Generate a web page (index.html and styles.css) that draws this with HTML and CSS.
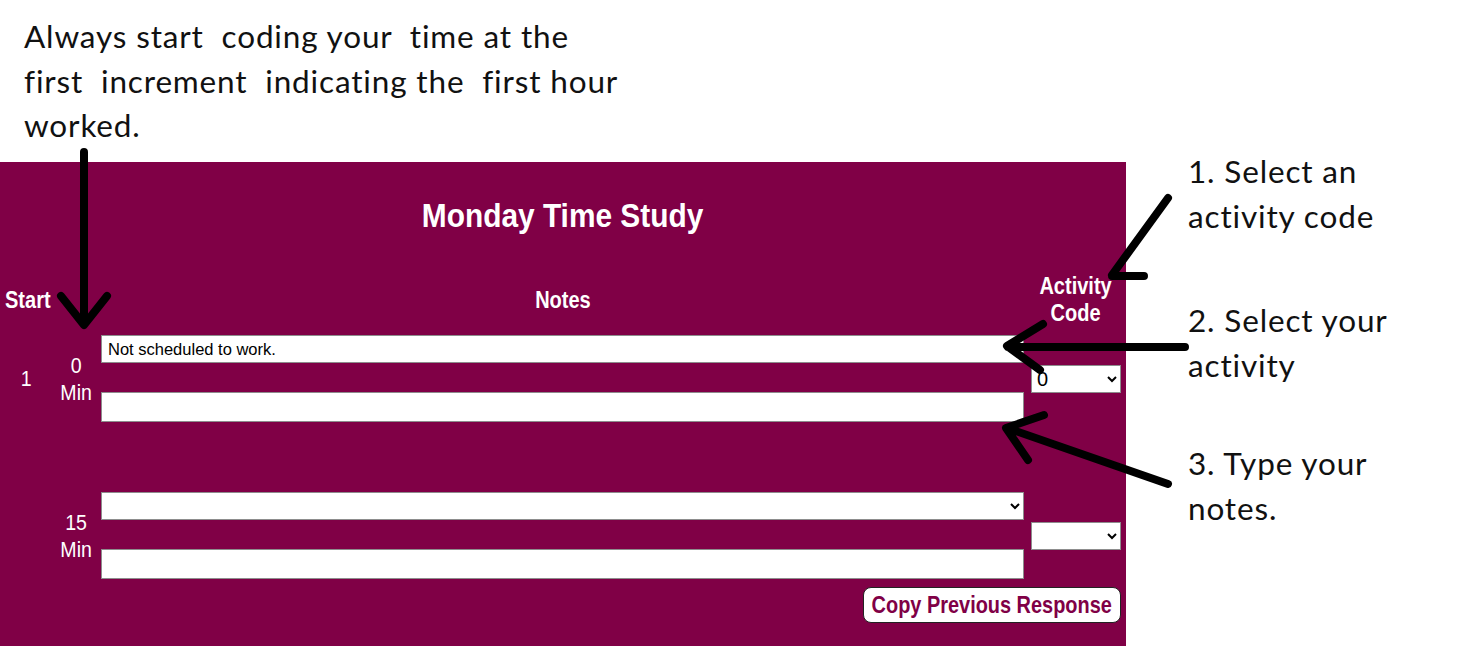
FILE: index.html
```html
<!DOCTYPE html>
<html lang="en">
<head>
<meta charset="UTF-8" />
<meta name="viewport" content="width=device-width, initial-scale=1" />
<title>Monday Time Study – How to code</title>
<link rel="stylesheet" href="styles.css">
</head>
<body>

<div class="page">
  <div class="left">
    <p class="lead">Always start&nbsp; coding your&nbsp; time at the<br>first&nbsp; increment&nbsp; indicating the&nbsp; first hour<br>worked.</p>

    <section class="panel">
      <h1 class="title"><span class="squeeze">Monday Time Study</span></h1>

      <div class="grid head">
        <div class="c-start"><span class="squeeze left">Start</span></div>
        <div></div>
        <div class="c-notes"><span class="squeeze">Notes</span></div>
        <div class="c-code"><span class="squeeze">Activity<br>Code</span></div>
      </div>

      <div class="grid entry">
        <div class="lbl"><span class="squeeze">1</span></div>
        <div class="lbl"><span class="squeeze">0<br>Min</span></div>
        <div class="fields">
          <select class="activity"><option>Not scheduled to work.</option></select>
          <input class="notes" type="text" />
        </div>
        <div class="c-code"><select class="code"><option>0</option></select></div>
      </div>

      <div class="grid entry second">
        <div class="lbl"></div>
        <div class="lbl"><span class="squeeze">15<br>Min</span></div>
        <div class="fields">
          <select class="activity"><option></option></select>
          <input class="notes" type="text" />
        </div>
        <div class="c-code"><select class="code"><option></option></select></div>
      </div>

      <div class="actions">
        <button class="copy"><span class="squeeze">Copy Previous Response</span></button>
      </div>
    </section>
  </div>

  <aside class="steps">
    <p class="step s1">1. Select an<br>activity code</p>
    <p class="step s2">2. Select your<br>activity</p>
    <p class="step s3">3. Type your<br>notes.</p>
  </aside>

  <!-- hand drawn pointer arrows over the form -->
  <svg class="arrows" width="1474" height="646" viewBox="0 0 1474 646">
    <g fill="none" stroke="#000" stroke-width="8" stroke-linecap="round" stroke-linejoin="round">
      <path d="M84 152 V324 M61 296 L84 325 L107 296" />
      <path d="M1168 198 L1112 275 M1112 276 H1144" />
      <path d="M1185 347 H1008 M1043 324 L1007 346 L1040 370" />
      <path d="M1168 484 L1007 428 M1044 415 L1006 428 L1028 460" />
    </g>
  </svg>
</div>

</body>
</html>
```

FILE: styles.css
```css
body { margin: 0; background: #fff; color: #111; font-family: Lato, "Open Sans", sans-serif; }
.page {
  position: relative;
  display: flex;
  width: 1474px;
  height: 646px;
  overflow: hidden;
}
.left {
  width: 1126px;
  display: flex;
  flex-direction: column;
}
.lead {
  box-sizing: border-box;
  height: 162px;
  margin: 0;
  padding: 14px 0 0 24px;
  font-size: 31.5px;
  letter-spacing: 0.85px;
  line-height: 44.5px;
  white-space: nowrap;
}

/* the form panel */
.panel {
  background: #800046;
  color: #fff;
  font-family: "Liberation Sans", Arial, sans-serif;
  padding: 35px 0 23px 0;
}
.squeeze {
  display: inline-block;
  transform: scaleX(0.87);
}
.squeeze.left {
  transform-origin: left center;
}
.title {
  margin: 0;
  text-align: center;
  font-size: 33px;
  line-height: 38px;
  font-weight: bold;
}
.title .squeeze {
  transform: scaleX(0.905);
}
.grid {
  display: grid;
  grid-template-columns: 52px 49px 923px 1fr;
  align-items: center;
}
.head {
  margin-top: 38px;
  font-weight: bold;
  font-size: 23px;
  line-height: 27px;
}
.c-start { padding-left: 5px; }
.c-notes { text-align: center; }
.c-code { text-align: center; padding-left: 7px; padding-right: 5px; }
.entry {
  margin-top: 8px;
}
.entry.second {
  margin-top: 70px;
}
.lbl {
  text-align: center;
  font-size: 22.5px;
  line-height: 27px;
}
.fields {
  display: flex;
  flex-direction: column;
  gap: 29px;
}
select, input {
  box-sizing: border-box;
  font-family: "Liberation Sans", Arial, sans-serif;
  font-size: 16.5px;
  color: #000;
  background: #fff;
  border: 1px solid #8d8d8d;
  border-radius: 0;
  margin: 0;
}
.activity {
  width: 923px;
  height: 28px;
  padding: 0 2px;
}
.notes {
  width: 923px;
  height: 30px;
  padding: 0 4px;
}
.code {
  display: block;
  width: 90px;
  height: 28px;
  padding: 0 1px;
  font-size: 20px;
}
.actions {
  display: flex;
  justify-content: flex-end;
  padding-right: 5px;
  margin-top: 8px;
}
.copy {
  display: flex;
  align-items: center;
  justify-content: center;
  width: 258px;
  height: 36px;
  padding: 0;
  background: #fff;
  color: #800046;
  border: 1.5px solid #222;
  border-radius: 8px;
  font-family: "Liberation Sans", Arial, sans-serif;
  font-weight: bold;
  font-size: 24px;
  line-height: 30px;
  white-space: nowrap;
}
.copy .squeeze {
  flex: none;
  transform: scaleX(0.83);
}

/* numbered instructions on the right */
.steps {
  padding: 149px 0 0 62px;
  font-size: 31.5px;
  letter-spacing: 0.85px;
  line-height: 45px;
  white-space: nowrap;
}
.step {
  margin: 0;
}
.s2 { margin-top: 59px; }
.s3 { margin-top: 53px; }

.arrows {
  position: absolute;
  left: 0;
  top: 0;
  pointer-events: none;
}
```
